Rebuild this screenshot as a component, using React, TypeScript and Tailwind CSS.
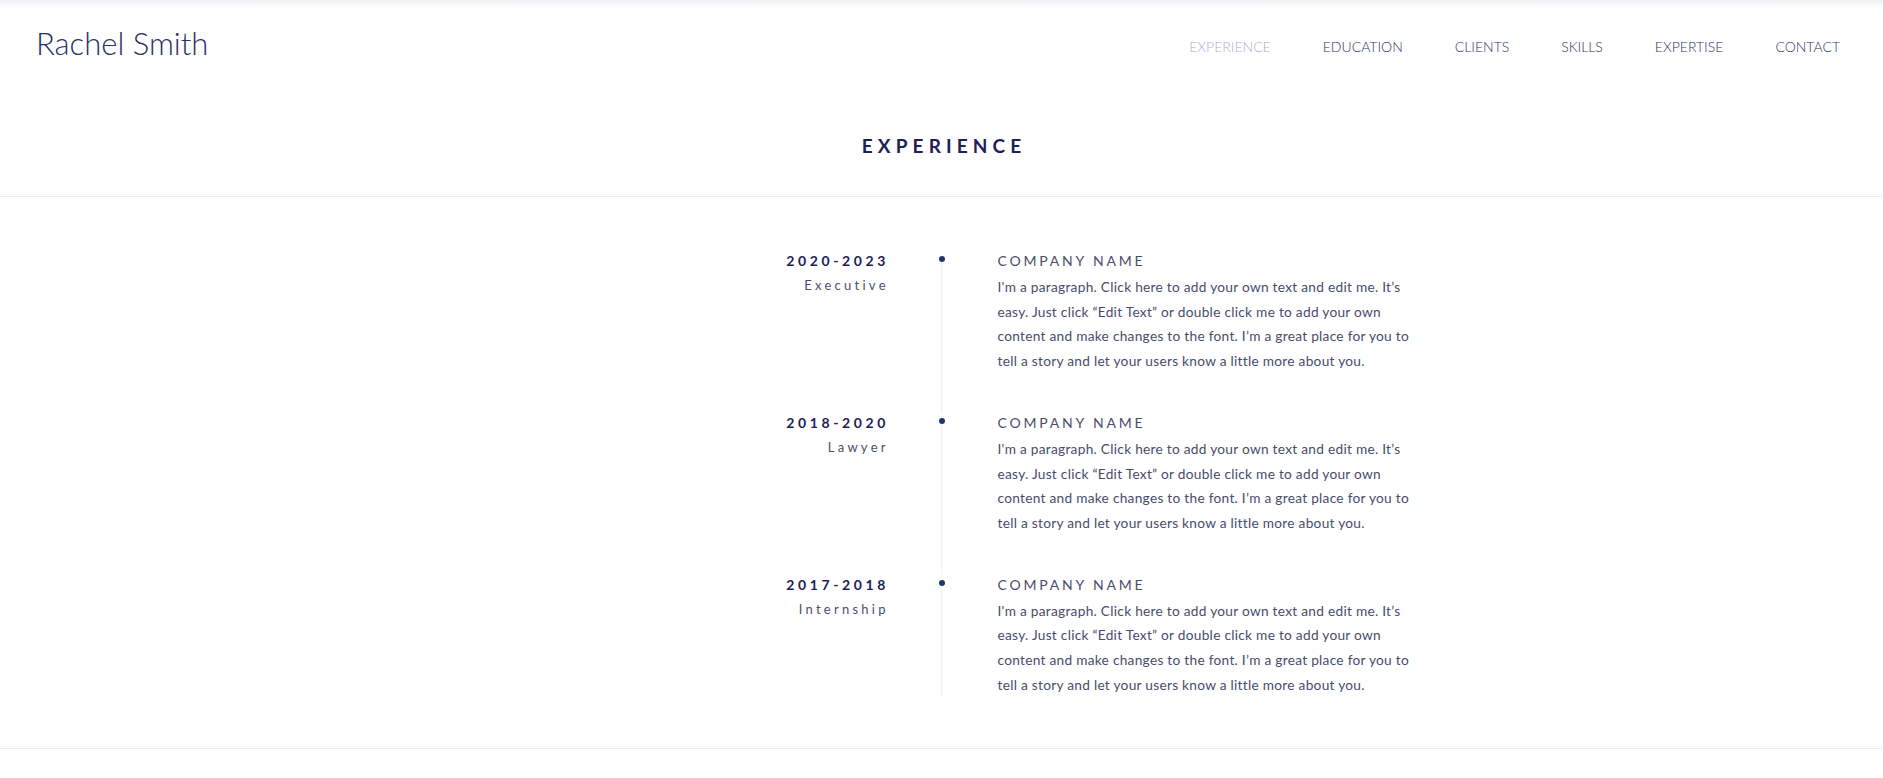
import React from "react";

const navItems = ["EXPERIENCE", "EDUCATION", "CLIENTS", "SKILLS", "EXPERTISE", "CONTACT"];

const jobs = [
  { years: "2020-2023", role: "Executive" },
  { years: "2018-2020", role: "Lawyer" },
  { years: "2017-2018", role: "Internship" },
];

const paragraph =
  "I'm a paragraph. Click here to add your own text and edit me. It’s easy. Just click “Edit Text” or double click me to add your own content and make changes to the font. I’m a great place for you to tell a story and let your users know a little more about you.";

export default function App() {
  return (
    <div
      className="min-h-[778px] bg-white"
      style={{ fontFamily: "Lato, 'Noto Sans', sans-serif" }}
    >
      {/* Header */}
      <header className="h-[88px] bg-gradient-to-b from-[#eef0f3] via-white to-white bg-[length:100%_14px] bg-no-repeat">
        <div className="flex items-start justify-between pl-[36px] pr-[43px] pt-[25px]">
          <div className="text-[31px] leading-[37px] font-light text-[#2b2f63]">
            Rachel Smith
          </div>
          <nav className="mt-[13px] flex items-center gap-[52px]">
            {navItems.map((item, i) => (
              <a
                key={item}
                href="#"
                className={
                  i === 0
                    ? "text-[14px] leading-[18px] font-light text-[#aaadd6]"
                    : "text-[14px] leading-[18px] font-light text-[#2f3366]"
                }
              >
                {item}
              </a>
            ))}
          </nav>
        </div>
      </header>

      {/* Section title */}
      <div className="border-b border-[#ececec] pt-[44px] pb-[36px] text-center">
        <h2 className="text-[19px] leading-[28px] font-bold tracking-[0.27em] text-[#1c2257] pl-[0.27em]">
          EXPERIENCE
        </h2>
      </div>

      {/* Timeline */}
      <div className="pt-[54px] pb-[51px] border-b border-[#ececec]">
        {jobs.map((job, i) => (
          <div key={job.years} className="grid grid-cols-[1fr_112px_1fr]">
            <div className="text-right">
              <div className="text-[14px] leading-[20px] font-bold tracking-[0.26em] mr-[-0.26em] text-[#1c2257]">
                {job.years}
              </div>
              <div className="mt-[4px] text-[13px] leading-[20px] tracking-[0.25em] mr-[-0.25em] text-[#4a4e6c]">
                {job.role}
              </div>
            </div>
            <div className="flex flex-col items-center">
              <div className="mt-[5px] h-[6px] w-[6px] rounded-full bg-[#1d3768]" />
              <div className="w-px flex-1 bg-[#f0f1f3]" />
            </div>
            <div className={i === jobs.length - 1 ? "pb-0" : "pb-[39px]"}>
              <div className="text-[14px] leading-[20px] tracking-[0.2em] text-[#4a4e6c]">
                COMPANY NAME
              </div>
              <p className="mt-[4px] w-[418px] text-[13.7px] leading-[24.7px] tracking-[0.02em] text-[#474c6c]">
                {paragraph}
              </p>
            </div>
          </div>
        ))}
      </div>
    </div>
  );
}
